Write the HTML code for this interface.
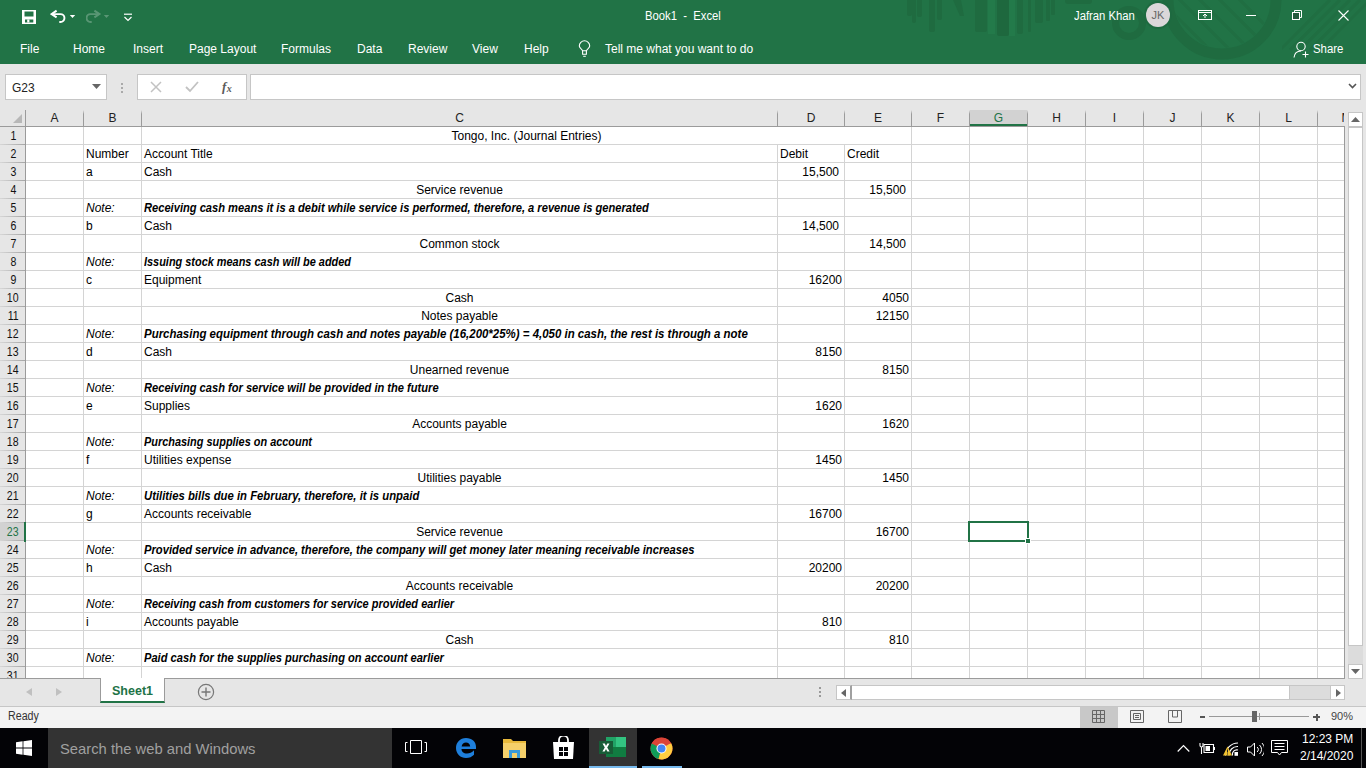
<!DOCTYPE html>
<html><head><meta charset="utf-8">
<style>
*{box-sizing:border-box}
html,body{margin:0;padding:0}
body{width:1366px;height:768px;overflow:hidden;position:relative;font-family:"Liberation Sans",sans-serif;background:#fff}
.abs{position:absolute}
#title{position:absolute;left:0;top:0;width:1366px;height:64px;background:#217346;overflow:hidden}
.wt{position:absolute;color:#fff;font-size:12px;line-height:12px;white-space:pre}
#fbar{position:absolute;left:0;top:64px;width:1366px;height:46px;background:#e6e6e6}
.box{position:absolute;background:#fff;border:1px solid #c6c6c6}
#grid{position:absolute;left:0;top:110px;width:1345px;height:569px;background:#fff;overflow:hidden}
.hl{position:absolute;left:26px;width:1319px;height:1px;background:#d4d4d4}
.vl{position:absolute;width:1px;height:552px;background:#d4d4d4}
.t{position:absolute;font-size:12px;line-height:12px;white-space:pre;color:#000;transform-origin:0 0}
.t.c{width:400px;text-align:center}
.t.i{font-style:italic}
.t.bi{font-style:italic;font-weight:700}
.rh{position:absolute;left:0;width:25px;height:17px;background:#e6e6e6;color:#111;font-size:12px;line-height:17px;text-align:center}
.rh span{display:inline-block;transform:scaleX(0.88);position:relative;top:1px;left:0.5px}
.rh.sel{background:#d2d2d2;color:#217346}
.rhl{position:absolute;left:0;width:25px;height:1px;background:linear-gradient(to right,#d6d6d6,#a6a6a6)}
.ch{position:absolute;top:0;height:16px;background:#e6e6e6;color:#222;font-size:12px;line-height:16px;text-align:center}
.ch.sel{background:#d2d2d2;color:#217346}
.chl{position:absolute;top:0;width:1px;height:16px;background:linear-gradient(#e6e6e6,#9b9b9b 25%,#9b9b9b)}
</style></head><body>

<!-- TITLE BAR -->
<div id="title">
  <svg class="abs" style="left:0;top:0" width="1366" height="64" viewBox="0 0 1366 64">
    <defs>
      <clipPath id="ci"><circle cx="1222" cy="0" r="48"/></clipPath>
      <clipPath id="cr"><rect x="1282" y="0" width="84" height="64"/></clipPath>
    </defs>
    <g fill="#1f6b40">
      <rect x="907" y="-3" width="5" height="19" rx="2"/>
      <rect x="912" y="-3" width="4" height="26" rx="2"/>
      <rect x="917" y="-3" width="5" height="20" rx="2"/>
      <rect x="929" y="-3" width="6" height="35" rx="2"/>
      <rect x="937" y="-3" width="5" height="23" rx="2"/>
      <path d="M953 0h8l3 16h-4z"/>
      <rect x="975" y="-3" width="12" height="35" rx="2"/>
      <rect x="997" y="-3" width="12" height="39" rx="2" fill="#1e683e"/>
      <rect x="1017" y="-3" width="6" height="37" rx="2"/>
      <rect x="1028" y="-3" width="3" height="35" rx="1"/>
      <rect x="1035" y="-3" width="8" height="26" rx="2"/>
      <rect x="1046" y="-3" width="4" height="24" rx="1"/>
      <rect x="1051" y="-3" width="4" height="18" rx="1"/>
      <rect x="1065" y="-3" width="27" height="7" rx="3"/>
    </g>
    <g fill="#237a4a">
      <rect x="988" y="0" width="7" height="34"/>
      <rect x="1009" y="0" width="6" height="36"/>
    </g>
    <g fill="none" stroke="#1f6b40">
      <circle cx="1222" cy="0" r="54" stroke-width="11"/>
      <circle cx="1129" cy="23" r="13.5" stroke-width="7"/>
    </g>
    <g clip-path="url(#ci)" stroke="#206e42" stroke-width="3">
      <path d="M1150 -10l80 80M1160 -20l80 80M1170 -30l80 80M1180 -40l80 80M1190 -50l80 80"/>
    </g>
    <g clip-path="url(#cr)" stroke="#206e42" stroke-width="3">
      <path d="M1330 0l-50 50M1340 0l-50 50M1350 0l-50 50M1360 0l-50 50M1370 0l-50 50"/>
    </g>
  </svg>
  <!-- save icon -->
  <svg class="abs" style="left:22px;top:10px" width="14" height="14" viewBox="0 0 14 14">
    <rect x="0" y="0" width="14" height="14" fill="#fff"/>
    <rect x="2.5" y="1.5" width="9" height="5" fill="#217346"/>
    <rect x="3" y="9.5" width="8.3" height="3" fill="#217346"/>
    <rect x="5.2" y="9.5" width="2.2" height="3" fill="#fff"/>
  </svg>
  <!-- undo -->
  <svg class="abs" style="left:50px;top:9px" width="30" height="16" viewBox="0 0 30 16">
    <path d="M6.6 1.6L1.6 5.1 6.6 8.4" fill="none" stroke="#fff" stroke-width="2" stroke-linejoin="miter"/>
    <path d="M2 5.1H10.5A3.95 3.95 0 0 1 10.5 13H9.3" fill="none" stroke="#fff" stroke-width="1.9"/>
    <path d="M19.8 5.9h5.4l-2.7 3.1z" fill="#fff"/>
  </svg>
  <!-- redo (disabled) -->
  <svg class="abs" style="left:86px;top:9px" width="30" height="16" viewBox="0 0 30 16" opacity="0.25">
    <path d="M8.4 1.6L13.4 5.1 8.4 8.4" fill="none" stroke="#fff" stroke-width="2"/>
    <path d="M13 5.1H4.5A3.95 3.95 0 0 0 4.5 13H5.7" fill="none" stroke="#fff" stroke-width="1.9"/>
    <path d="M17.8 5.9h5.4l-2.7 3.1z" fill="#fff"/>
  </svg>
  <!-- customize -->
  <svg class="abs" style="left:123px;top:13px" width="10" height="10" viewBox="0 0 10 10">
    <path d="M1 1.2h8" stroke="#fff" stroke-width="1.2"/>
    <path d="M1.5 4l3.5 3.5 3.5-3.5" fill="none" stroke="#fff" stroke-width="1.2"/>
  </svg>
  <div class="wt" style="left:645px;top:10px;transform:scaleX(0.94);transform-origin:0 0">Book1  -  Excel</div>
  <div class="wt" style="left:1074px;top:10px;transform:scaleX(0.94);transform-origin:0 0">Jafran Khan</div>
  <div class="abs" style="left:1144px;top:1px;width:28px;height:28px;border-radius:14px;background:#1e6a40"></div>
  <div class="abs" style="left:1146px;top:3px;width:24px;height:24px;border-radius:12px;background:#dbd7d9;color:#666;font-size:11px;line-height:24px;text-align:center">JK</div>
  <!-- ribbon display options -->
  <svg class="abs" style="left:1198px;top:10px" width="14" height="10" viewBox="0 0 14 10">
    <rect x="0.5" y="0.5" width="13" height="9" fill="none" stroke="#fff"/>
    <path d="M0.5 2.5h13" stroke="#fff"/>
    <path d="M7 8V4M5 6l2-2 2 2" fill="none" stroke="#fff"/>
  </svg>
  <!-- min -->
  <div class="abs" style="left:1246px;top:15px;width:10px;height:1px;background:#fff"></div>
  <!-- restore -->
  <svg class="abs" style="left:1292px;top:10px" width="11" height="11" viewBox="0 0 11 11">
    <rect x="0.5" y="2.5" width="7" height="7" fill="#235a3c" stroke="#fff"/>
    <path d="M2.5 2.5V0.5h7v7h-2" fill="none" stroke="#fff"/>
  </svg>
  <!-- close -->
  <svg class="abs" style="left:1338px;top:10px" width="11" height="11" viewBox="0 0 11 11">
    <path d="M0.5 0.5l10 10M10.5 0.5l-10 10" stroke="#fff" stroke-width="1.1"/>
  </svg>
  <!-- tabs -->
  <div class="wt" style="left:20px;top:43px">File</div>
  <div class="wt" style="left:73px;top:43px">Home</div>
  <div class="wt" style="left:133px;top:43px">Insert</div>
  <div class="wt" style="left:189px;top:43px">Page Layout</div>
  <div class="wt" style="left:281px;top:43px">Formulas</div>
  <div class="wt" style="left:357px;top:43px">Data</div>
  <div class="wt" style="left:408px;top:43px">Review</div>
  <div class="wt" style="left:472px;top:43px">View</div>
  <div class="wt" style="left:524px;top:43px">Help</div>
  <svg class="abs" style="left:577px;top:40px" width="15" height="17" viewBox="0 0 15 17">
    <path d="M5.6 10.8C5.2 9 2.3 8.3 2.3 6A5.2 5.2 0 0 1 12.7 6C12.7 8.3 9.8 9 9.4 10.8z" fill="none" stroke="#fff" stroke-width="1.1"/>
    <path d="M5.6 11v3.3h3.8V11" fill="none" stroke="#fff" stroke-width="1.1"/>
    <path d="M6.2 16.3h2.6" stroke="#fff" stroke-width="1"/>
  </svg>
  <div class="wt" style="left:605px;top:43px">Tell me what you want to do</div>
  <!-- share -->
  <svg class="abs" style="left:1293px;top:41px" width="17" height="17" viewBox="0 0 17 17">
    <circle cx="8" cy="5.5" r="4.2" fill="none" stroke="#fff" stroke-width="1.1"/>
    <path d="M1 16.5C1.5 12 4 10 8 10" fill="none" stroke="#fff" stroke-width="1.1"/>
    <path d="M12.5 10.5v6M9.5 13.5h6" stroke="#fff" stroke-width="1.1"/>
  </svg>
  <div class="wt" style="left:1313px;top:43px;transform:scaleX(0.95);transform-origin:0 0">Share</div>
</div>

<!-- FORMULA BAR -->
<div id="fbar">
  <div class="box" style="left:5px;top:10px;width:102px;height:26px"></div>
  <div class="abs" style="left:12px;top:18px;font-size:12px;line-height:12px;color:#222">G23</div>
  <svg class="abs" style="left:92px;top:20px" width="9" height="6" viewBox="0 0 9 6"><path d="M0 0h9L4.5 5z" fill="#666"/></svg>
  <div class="abs" style="left:121px;top:19px;width:2px;height:2px;background:#aaa"></div>
  <div class="abs" style="left:121px;top:23px;width:2px;height:2px;background:#aaa"></div>
  <div class="abs" style="left:121px;top:27px;width:2px;height:2px;background:#aaa"></div>
  <div class="box" style="left:137px;top:10px;width:110px;height:26px"></div>
  <svg class="abs" style="left:150px;top:17px" width="12" height="12" viewBox="0 0 12 12"><path d="M1 1l10 10M11 1L1 11" stroke="#c2c2c2" stroke-width="1.5"/></svg>
  <svg class="abs" style="left:185px;top:17px" width="14" height="12" viewBox="0 0 14 12"><path d="M1 6l4 4 8-9" fill="none" stroke="#c2c2c2" stroke-width="1.8"/></svg>
  <div class="abs" style="left:222px;top:15px;font-family:'Liberation Serif';font-style:italic;font-weight:700;font-size:13px;line-height:16px;color:#5a5a5a">f<span style="font-size:10px;position:relative;top:1px;left:0.5px">x</span></div>
  <div class="box" style="left:250px;top:10px;width:1111px;height:26px"></div>
  <svg class="abs" style="left:1348px;top:19px" width="9" height="6" viewBox="0 0 9 6"><path d="M1 1l3.5 3.5L8 1" fill="none" stroke="#555" stroke-width="1.6"/></svg>
</div>

<!-- GRID AREA -->
<div class="abs" style="left:0;top:110px;width:1345px;height:16px;background:#e6e6e6"></div>
<div class="abs" style="left:0;top:110px;width:1344px;height:16px;overflow:hidden">
<div class="ch" style="left:26px;width:57px">A</div>
<div class="chl" style="left:83px"></div>
<div class="ch" style="left:84px;width:57px">B</div>
<div class="chl" style="left:141px"></div>
<div class="ch" style="left:142px;width:635px">C</div>
<div class="chl" style="left:777px"></div>
<div class="ch" style="left:778px;width:66px">D</div>
<div class="chl" style="left:844px"></div>
<div class="ch" style="left:845px;width:66px">E</div>
<div class="chl" style="left:911px"></div>
<div class="ch" style="left:912px;width:57px">F</div>
<div class="chl" style="left:969px"></div>
<div class="ch sel" style="left:970px;width:57px">G</div>
<div class="chl" style="left:1027px"></div>
<div class="ch" style="left:1028px;width:57px">H</div>
<div class="chl" style="left:1085px"></div>
<div class="ch" style="left:1086px;width:57px">I</div>
<div class="chl" style="left:1143px"></div>
<div class="ch" style="left:1144px;width:57px">J</div>
<div class="chl" style="left:1201px"></div>
<div class="ch" style="left:1202px;width:57px">K</div>
<div class="chl" style="left:1259px"></div>
<div class="ch" style="left:1260px;width:57px">L</div>
<div class="chl" style="left:1317px"></div>
<div class="ch" style="left:1318px;width:57px">M</div>
</div>
<div class="abs" style="left:0;top:126px;width:1345px;height:1px;background:#9b9b9b"></div>
<svg class="abs" style="left:13px;top:114px" width="9" height="9" viewBox="0 0 9 9"><path d="M9 0V9H0z" fill="#b8b8b8"/></svg>
<div class="abs" style="left:970px;top:124px;width:57px;height:2px;background:#217346"></div>

<div class="abs" style="left:26px;top:127px;width:1319px;height:551px;background:#fff"></div>
<div class="hl" style="top:144px"></div>
<div class="hl" style="top:162px"></div>
<div class="hl" style="top:180px"></div>
<div class="hl" style="top:198px"></div>
<div class="hl" style="top:216px"></div>
<div class="hl" style="top:234px"></div>
<div class="hl" style="top:252px"></div>
<div class="hl" style="top:270px"></div>
<div class="hl" style="top:288px"></div>
<div class="hl" style="top:306px"></div>
<div class="hl" style="top:324px"></div>
<div class="hl" style="top:342px"></div>
<div class="hl" style="top:360px"></div>
<div class="hl" style="top:378px"></div>
<div class="hl" style="top:396px"></div>
<div class="hl" style="top:414px"></div>
<div class="hl" style="top:432px"></div>
<div class="hl" style="top:450px"></div>
<div class="hl" style="top:468px"></div>
<div class="hl" style="top:486px"></div>
<div class="hl" style="top:504px"></div>
<div class="hl" style="top:522px"></div>
<div class="hl" style="top:540px"></div>
<div class="hl" style="top:558px"></div>
<div class="hl" style="top:576px"></div>
<div class="hl" style="top:594px"></div>
<div class="hl" style="top:612px"></div>
<div class="hl" style="top:630px"></div>
<div class="hl" style="top:648px"></div>
<div class="hl" style="top:666px"></div>
<div class="vl" style="left:83px;top:127px"></div>
<div class="vl" style="left:141px;top:127px"></div>
<div class="vl" style="left:777px;top:145px"></div>
<div class="vl" style="left:844px;top:145px"></div>
<div class="vl" style="left:911px;top:127px"></div>
<div class="vl" style="left:969px;top:127px"></div>
<div class="vl" style="left:1027px;top:127px"></div>
<div class="vl" style="left:1085px;top:127px"></div>
<div class="vl" style="left:1143px;top:127px"></div>
<div class="vl" style="left:1201px;top:127px"></div>
<div class="vl" style="left:1259px;top:127px"></div>
<div class="vl" style="left:1317px;top:127px"></div>
<div class="rh" style="top:127px"><span>1</span></div>
<div class="rhl" style="top:144px"></div>
<div class="rh" style="top:145px"><span>2</span></div>
<div class="rhl" style="top:162px"></div>
<div class="rh" style="top:163px"><span>3</span></div>
<div class="rhl" style="top:180px"></div>
<div class="rh" style="top:181px"><span>4</span></div>
<div class="rhl" style="top:198px"></div>
<div class="rh" style="top:199px"><span>5</span></div>
<div class="rhl" style="top:216px"></div>
<div class="rh" style="top:217px"><span>6</span></div>
<div class="rhl" style="top:234px"></div>
<div class="rh" style="top:235px"><span>7</span></div>
<div class="rhl" style="top:252px"></div>
<div class="rh" style="top:253px"><span>8</span></div>
<div class="rhl" style="top:270px"></div>
<div class="rh" style="top:271px"><span>9</span></div>
<div class="rhl" style="top:288px"></div>
<div class="rh" style="top:289px"><span>10</span></div>
<div class="rhl" style="top:306px"></div>
<div class="rh" style="top:307px"><span>11</span></div>
<div class="rhl" style="top:324px"></div>
<div class="rh" style="top:325px"><span>12</span></div>
<div class="rhl" style="top:342px"></div>
<div class="rh" style="top:343px"><span>13</span></div>
<div class="rhl" style="top:360px"></div>
<div class="rh" style="top:361px"><span>14</span></div>
<div class="rhl" style="top:378px"></div>
<div class="rh" style="top:379px"><span>15</span></div>
<div class="rhl" style="top:396px"></div>
<div class="rh" style="top:397px"><span>16</span></div>
<div class="rhl" style="top:414px"></div>
<div class="rh" style="top:415px"><span>17</span></div>
<div class="rhl" style="top:432px"></div>
<div class="rh" style="top:433px"><span>18</span></div>
<div class="rhl" style="top:450px"></div>
<div class="rh" style="top:451px"><span>19</span></div>
<div class="rhl" style="top:468px"></div>
<div class="rh" style="top:469px"><span>20</span></div>
<div class="rhl" style="top:486px"></div>
<div class="rh" style="top:487px"><span>21</span></div>
<div class="rhl" style="top:504px"></div>
<div class="rh" style="top:505px"><span>22</span></div>
<div class="rhl" style="top:522px"></div>
<div class="rh sel" style="top:523px"><span>23</span></div>
<div class="rhl" style="top:540px"></div>
<div class="rh" style="top:541px"><span>24</span></div>
<div class="rhl" style="top:558px"></div>
<div class="rh" style="top:559px"><span>25</span></div>
<div class="rhl" style="top:576px"></div>
<div class="rh" style="top:577px"><span>26</span></div>
<div class="rhl" style="top:594px"></div>
<div class="rh" style="top:595px"><span>27</span></div>
<div class="rhl" style="top:612px"></div>
<div class="rh" style="top:613px"><span>28</span></div>
<div class="rhl" style="top:630px"></div>
<div class="rh" style="top:631px"><span>29</span></div>
<div class="rhl" style="top:648px"></div>
<div class="rh" style="top:649px"><span>30</span></div>
<div class="rhl" style="top:666px"></div>
<div class="rh" style="top:667px"><span>31</span></div>
<div class="abs" style="left:25px;top:110px;width:1px;height:568px;background:#9b9b9b"></div>
<div class="abs" style="left:24px;top:522px;width:2px;height:20px;background:#217346"></div>
<div class="abs" style="left:1344px;top:127px;width:1px;height:552px;background:#9b9b9b"></div>
<div class="abs" style="left:0;top:678px;width:1345px;height:1px;background:#9b9b9b"></div>

<div class="t c" style="left:326.5px;top:130px">Tongo, Inc. (Journal Entries)</div>
<div class="t" style="left:86px;top:148px">Number</div>
<div class="t" style="left:144px;top:148px">Account Title</div>
<div class="t" style="left:780px;top:148px">Debit</div>
<div class="t" style="left:847px;top:148px">Credit</div>
<div class="t" style="left:86px;top:166px">a</div>
<div class="t" style="left:144px;top:166px">Cash</div>
<div class="t" style="right:527px;top:166px">15,500</div>
<div class="t c" style="left:259.5px;top:184px">Service revenue</div>
<div class="t" style="right:460px;top:184px">15,500</div>
<div class="t i" style="left:86px;top:202px">Note:</div>
<div class="t bi" style="left:144px;top:202px;transform:scaleX(0.9274)">Receiving cash means it is a debit while service is performed, therefore, a revenue is generated</div>
<div class="t" style="left:86px;top:220px">b</div>
<div class="t" style="left:144px;top:220px">Cash</div>
<div class="t" style="right:527px;top:220px">14,500</div>
<div class="t c" style="left:259.5px;top:238px">Common stock</div>
<div class="t" style="right:460px;top:238px">14,500</div>
<div class="t i" style="left:86px;top:256px">Note:</div>
<div class="t bi" style="left:144px;top:256px;transform:scaleX(0.9102)">Issuing stock means cash will be added</div>
<div class="t" style="left:86px;top:274px">c</div>
<div class="t" style="left:144px;top:274px">Equipment</div>
<div class="t" style="right:524px;top:274px">16200</div>
<div class="t c" style="left:259.5px;top:292px">Cash</div>
<div class="t" style="right:457px;top:292px">4050</div>
<div class="t c" style="left:259.5px;top:310px">Notes payable</div>
<div class="t" style="right:457px;top:310px">12150</div>
<div class="t i" style="left:86px;top:328px">Note:</div>
<div class="t bi" style="left:144px;top:328px;transform:scaleX(0.9546)">Purchasing equipment through cash and notes payable (16,200*25%) = 4,050 in cash, the rest is through a note</div>
<div class="t" style="left:86px;top:346px">d</div>
<div class="t" style="left:144px;top:346px">Cash</div>
<div class="t" style="right:524px;top:346px">8150</div>
<div class="t c" style="left:259.5px;top:364px">Unearned revenue</div>
<div class="t" style="right:457px;top:364px">8150</div>
<div class="t i" style="left:86px;top:382px">Note:</div>
<div class="t bi" style="left:144px;top:382px;transform:scaleX(0.9261)">Receiving cash for service will be provided in the future</div>
<div class="t" style="left:86px;top:400px">e</div>
<div class="t" style="left:144px;top:400px">Supplies</div>
<div class="t" style="right:524px;top:400px">1620</div>
<div class="t c" style="left:259.5px;top:418px">Accounts payable</div>
<div class="t" style="right:457px;top:418px">1620</div>
<div class="t i" style="left:86px;top:436px">Note:</div>
<div class="t bi" style="left:144px;top:436px;transform:scaleX(0.9096)">Purchasing supplies on account</div>
<div class="t" style="left:86px;top:454px">f</div>
<div class="t" style="left:144px;top:454px">Utilities expense</div>
<div class="t" style="right:524px;top:454px">1450</div>
<div class="t c" style="left:259.5px;top:472px">Utilities payable</div>
<div class="t" style="right:457px;top:472px">1450</div>
<div class="t i" style="left:86px;top:490px">Note:</div>
<div class="t bi" style="left:144px;top:490px;transform:scaleX(0.9419)">Utilities bills due in February, therefore, it is unpaid</div>
<div class="t" style="left:86px;top:508px">g</div>
<div class="t" style="left:144px;top:508px">Accounts receivable</div>
<div class="t" style="right:524px;top:508px">16700</div>
<div class="t c" style="left:259.5px;top:526px">Service revenue</div>
<div class="t" style="right:457px;top:526px">16700</div>
<div class="t i" style="left:86px;top:544px">Note:</div>
<div class="t bi" style="left:144px;top:544px;transform:scaleX(0.9348)">Provided service in advance, therefore, the company will get money later meaning receivable increases</div>
<div class="t" style="left:86px;top:562px">h</div>
<div class="t" style="left:144px;top:562px">Cash</div>
<div class="t" style="right:524px;top:562px">20200</div>
<div class="t c" style="left:259.5px;top:580px">Accounts receivable</div>
<div class="t" style="right:457px;top:580px">20200</div>
<div class="t i" style="left:86px;top:598px">Note:</div>
<div class="t bi" style="left:144px;top:598px;transform:scaleX(0.9153)">Receiving cash from customers for service provided earlier</div>
<div class="t" style="left:86px;top:616px">i</div>
<div class="t" style="left:144px;top:616px">Accounts payable</div>
<div class="t" style="right:524px;top:616px">810</div>
<div class="t c" style="left:259.5px;top:634px">Cash</div>
<div class="t" style="right:457px;top:634px">810</div>
<div class="t i" style="left:86px;top:652px">Note:</div>
<div class="t bi" style="left:144px;top:652px;transform:scaleX(0.9273)">Paid cash for the supplies purchasing on account earlier</div>
<!-- selection -->
<div class="abs" style="left:968px;top:521px;width:61px;height:21px;border:2px solid #217346"></div>
<div class="abs" style="left:1025px;top:538px;width:6px;height:6px;background:#217346;border:1px solid #fff"></div>

<!-- VERTICAL SCROLLBAR -->
<div class="abs" style="left:1345px;top:110px;width:21px;height:569px;background:#e6e6e6"></div>
<div class="abs" style="left:1348px;top:127px;width:15px;height:537px;background:#dcdcdc"></div>
<div class="abs" style="left:1348px;top:112px;width:15px;height:15px;background:#fff;border:1px solid #c6c6c6"></div>
<svg class="abs" style="left:1351px;top:117px" width="9" height="5" viewBox="0 0 9 5"><path d="M0 5h9L4.5 0z" fill="#666"/></svg>
<div class="abs" style="left:1348px;top:127px;width:15px;height:519px;background:#fff;border:1px solid #c6c6c6"></div>
<div class="abs" style="left:1348px;top:664px;width:15px;height:15px;background:#fff;border:1px solid #c6c6c6"></div>
<svg class="abs" style="left:1351px;top:669px" width="9" height="5" viewBox="0 0 9 5"><path d="M0 0h9L4.5 5z" fill="#666"/></svg>

<!-- SHEET TABS -->
<div class="abs" style="left:0;top:679px;width:1366px;height:27px;background:#e6e6e6"></div>
<svg class="abs" style="left:26px;top:688px" width="6" height="8" viewBox="0 0 6 8"><path d="M6 0V8L0 4z" fill="#c0c0c0"/></svg>
<svg class="abs" style="left:56px;top:688px" width="6" height="8" viewBox="0 0 6 8"><path d="M0 0V8L6 4z" fill="#c0c0c0"/></svg>
<div class="abs" style="left:100px;top:678px;width:65px;height:25px;background:#fff;border-left:1px solid #9b9b9b;border-right:1px solid #9b9b9b;border-bottom:2px solid #217346"></div>
<div class="abs" style="left:112px;top:685px;font-size:12.5px;line-height:12px;font-weight:700;color:#217346">Sheet1</div>
<svg class="abs" style="left:197px;top:683px" width="18" height="18" viewBox="0 0 18 18"><circle cx="9" cy="9" r="7.6" fill="none" stroke="#777" stroke-width="1.2"/><path d="M9 4.5v9M4.5 9h9" stroke="#777" stroke-width="1.4"/></svg>
<div class="abs" style="left:819px;top:687px;width:2px;height:2px;background:#999"></div>
<div class="abs" style="left:819px;top:691px;width:2px;height:2px;background:#999"></div>
<div class="abs" style="left:819px;top:695px;width:2px;height:2px;background:#999"></div>
<div class="abs" style="left:836px;top:685px;width:509px;height:15px;background:#dcdcdc;border:1px solid #c6c6c6"></div>
<div class="abs" style="left:836px;top:685px;width:16px;height:15px;background:#fff;border:1px solid #c6c6c6;border-right:2px solid #a0a0a0"></div>
<svg class="abs" style="left:841px;top:689px" width="5" height="8" viewBox="0 0 5 8"><path d="M5 0V8L0 4z" fill="#666"/></svg>
<div class="abs" style="left:852px;top:685px;width:438px;height:15px;background:#fff;border:1px solid #c6c6c6;border-left:none"></div>
<div class="abs" style="left:1330px;top:685px;width:15px;height:15px;background:#fff;border:1px solid #c6c6c6"></div>
<svg class="abs" style="left:1336px;top:689px" width="5" height="8" viewBox="0 0 5 8"><path d="M0 0V8L5 4z" fill="#666"/></svg>

<!-- STATUS BAR -->
<div class="abs" style="left:0;top:706px;width:1366px;height:22px;background:#f3f3f3;border-top:1px solid #c6c6c6"></div>
<div class="abs" style="left:8px;top:710px;font-size:12px;line-height:12px;color:#333;transform:scaleX(0.89);transform-origin:0 0">Ready</div>
<div class="abs" style="left:1080px;top:707px;width:38px;height:21px;background:#c8c8c8"></div>
<svg class="abs" style="left:1092px;top:710px" width="13" height="13" viewBox="0 0 13 13"><path d="M0.5 0.5h12v12h-12zM4.5 0.5v12M8.5 0.5v12M0.5 4.5h12M0.5 8.5h12" fill="none" stroke="#666"/></svg>
<svg class="abs" style="left:1130px;top:710px" width="14" height="13" viewBox="0 0 14 13"><path d="M0.5 0.5h13v12h-13z M3.5 3.5h7v6h-7z M5 5.5h4M5 7.5h4" fill="none" stroke="#666"/></svg>
<svg class="abs" style="left:1168px;top:710px" width="14" height="13" viewBox="0 0 14 13"><path d="M0.5 0.5h13v12h-13z M4.5 0.5v6.5h5v-6.5" fill="none" stroke="#666"/></svg>
<div class="abs" style="left:1200px;top:716px;width:5px;height:2px;background:#555"></div>
<div class="abs" style="left:1209px;top:716px;width:100px;height:1px;background:#999"></div>
<div class="abs" style="left:1252px;top:711px;width:5px;height:11px;background:#666"></div>
<div class="abs" style="left:1259px;top:713px;width:1px;height:7px;background:#999"></div>
<div class="abs" style="left:1313px;top:716px;width:7px;height:2px;background:#555"></div>
<div class="abs" style="left:1315.5px;top:713.5px;width:2px;height:7px;background:#555"></div>
<div class="abs" style="left:1331px;top:711px;font-size:11px;line-height:11px;color:#444">90%</div>

<!-- TASKBAR -->
<div class="abs" style="left:0;top:728px;width:1366px;height:40px;background:#030306"></div>
<svg class="abs" style="left:16px;top:740px" width="16" height="16" viewBox="0 0 16 16"><path d="M0 2.2L6.6 1.3V7.6H0zM7.4 1.2L16 0V7.6H7.4zM0 8.4H6.6V14.7L0 13.8zM7.4 8.4H16V16L7.4 14.8z" fill="#fff"/></svg>
<div class="abs" style="left:48px;top:728px;width:344px;height:40px;background:#333333"></div>
<div class="abs" style="left:60px;top:741px;font-size:15px;line-height:15px;color:#a0a0a0;transform:scaleX(0.985);transform-origin:0 0">Search the web and Windows</div>
<svg class="abs" style="left:405px;top:740px" width="22" height="14" viewBox="0 0 22 14"><path d="M5.5 0.5h11v13h-11z M2.5 2.5h-2v9h2 M19.5 2.5h2v9h-2" fill="none" stroke="#fff"/></svg>
<!-- edge -->
<svg class="abs" style="left:455px;top:737px" width="22" height="22" viewBox="0 0 22 22"><path d="M11 1C5 1 1 5.5 1 11c0 6 4.5 10 10 10 3.5 0 6-1.3 8-3.3v-4.5c-2 2.2-4.5 3.3-7 3.3-3.5 0-5.5-2-5.5-4.5H21V10C21 4.5 17 1 11 1zM6.6 9.5C7 7 8.8 5.5 11 5.5s4 1.5 4.2 4z" fill="#1e7fdb"/></svg>
<!-- explorer -->
<svg class="abs" style="left:503px;top:738px" width="23" height="20" viewBox="0 0 23 20"><path d="M0 1h8l2 2h13v17H0z" fill="#e8b93b"/><path d="M0 5h23v15H0z" fill="#f5d06a"/><path d="M6 12h11v8H6z" fill="#3a9ad9"/><path d="M9 15h5v5H9z" fill="#f5d06a"/></svg>
<!-- store -->
<svg class="abs" style="left:552px;top:736px" width="23" height="23" viewBox="0 0 23 23"><path d="M7 6V4a4.5 4.5 0 0 1 9 0v2" fill="none" stroke="#fff" stroke-width="1.8"/><path d="M1 6h21l-1 17H2z" fill="#fff"/><path d="M7 11h4v4H7zM12 11h4v4h-4zM7 16h4v4H7zM12 16h4v4h-4z" fill="#030306"/></svg>
<!-- excel active -->
<div class="abs" style="left:589px;top:728px;width:48px;height:40px;background:#333"></div>
<div class="abs" style="left:589px;top:766px;width:48px;height:2px;background:#76b9ed"></div>
<svg class="abs" style="left:599px;top:737px" width="27" height="20" viewBox="0 0 27 20"><path d="M7 0h20v20H7z" fill="#21a366"/><path d="M17 0h10v10H17z" fill="#33c481"/><path d="M7 10h20v10H7z" fill="#107c41"/><path d="M0 4h14v13H0z" fill="#185c37"/><path d="M3.5 6.5h2.3L7 9l1.3-2.5h2.2L8.2 10.5l2.4 4H8.3L7 12l-1.3 2.5H3.4l2.4-4z" fill="#fff"/></svg>
<!-- chrome -->
<svg class="abs" style="left:650px;top:737px" width="23" height="23" viewBox="0 0 23 23"><circle cx="11.5" cy="11.5" r="11" fill="#db4437"/><path d="M11.5 11.5L1.7 6.5A11 11 0 0 0 8.5 22z" fill="#0f9d58"/><path d="M11.5 11.5L8.5 22A11 11 0 0 0 22.5 11.5 11 11 0 0 0 21 6z" fill="#ffcd40"/><path d="M11.5 6.5H21A11 11 0 0 0 1.7 6.5z" fill="#db4437"/><circle cx="11.5" cy="11.5" r="5" fill="#fff"/><circle cx="11.5" cy="11.5" r="4" fill="#4285f4"/></svg>
<div class="abs" style="left:642px;top:766px;width:40px;height:2px;background:#76b9ed"></div>
<!-- tray -->
<svg class="abs" style="left:1177px;top:744px" width="13" height="8" viewBox="0 0 13 8"><path d="M0.7 7.5L6.5 1.5l5.8 6" fill="none" stroke="#fff" stroke-width="1.2"/></svg>
<svg class="abs" style="left:1199px;top:742px" width="18" height="13" viewBox="0 0 18 13"><path d="M5 2.5h9.5v8h-9.5z" fill="none" stroke="#fff" stroke-width="1.1"/><path d="M6.5 4h4.5v5H6.5z" fill="#fff"/><path d="M15 5h1v3h-1z" fill="#fff"/><path d="M1 1v2.5a1.5 1.5 0 0 0 3 0V1M2.5 5v7" fill="none" stroke="#fff" stroke-width="1.1"/></svg>
<svg class="abs" style="left:1222px;top:741px" width="17" height="15" viewBox="0 0 17 15"><path d="M10.5 14.5A4.5 4.5 0 0 1 16 9M7 14.5A8.5 8.5 0 0 1 16 5.5M3.5 14.5A12.5 12.5 0 0 1 16 2" fill="none" stroke="#fff" stroke-width="1.2"/><path d="M12.5 11h3.5v3.8h-3.5z" fill="#fff"/><path d="M5.5 5.5L10 14.5H1z" fill="#f2c230"/><path d="M5.5 8.5v3M5.5 12.5v1" stroke="#222" stroke-width="1"/></svg>
<svg class="abs" style="left:1247px;top:742px" width="17" height="15" viewBox="0 0 17 15"><path d="M0.5 5h3l4-4v13l-4-4h-3z" fill="none" stroke="#fff"/><path d="M10 5a3 3 0 0 1 0 5M12.5 3a6 6 0 0 1 0 9M15 1a9 9 0 0 1 0 13" fill="none" stroke="#fff"/></svg>
<svg class="abs" style="left:1271px;top:740px" width="17" height="16" viewBox="0 0 17 16"><path d="M0.5 0.5h16v12h-6l-2 2.5-2-2.5h-6z" fill="none" stroke="#fff"/><path d="M3.5 3.5h10M3.5 6.5h10M3.5 9.5h10" stroke="#fff"/></svg>
<div class="abs" style="left:1302px;top:733px;font-size:12px;line-height:12px;color:#fff">12:23 PM</div>
<div class="abs" style="left:1300px;top:750px;font-size:12px;line-height:12px;color:#fff">2/14/2020</div>
<div class="abs" style="left:1361px;top:728px;width:1px;height:40px;background:#555"></div>

</body></html>
